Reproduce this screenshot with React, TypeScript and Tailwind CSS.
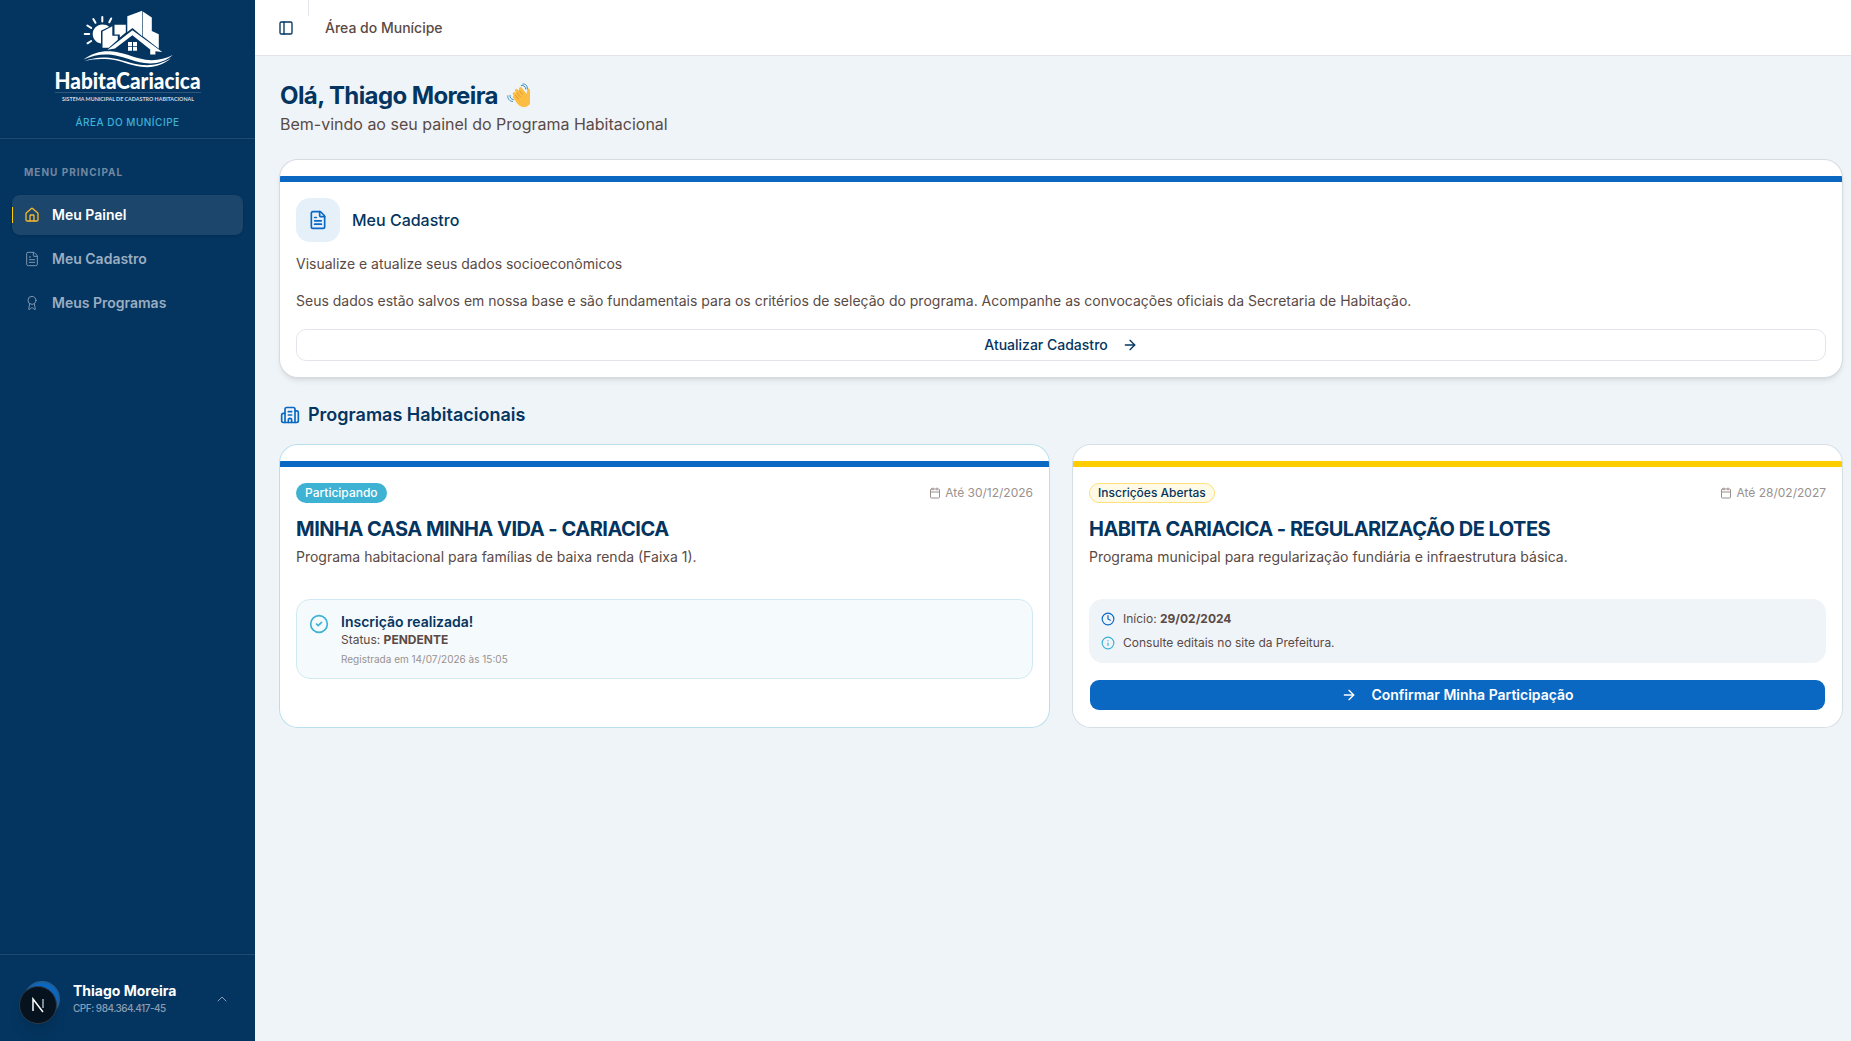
import {
  ArrowRight,
  Award,
  Building2,
  Calendar,
  ChevronUp,
  CircleCheck,
  Clock,
  FileText,
  House,
  Info,
  PanelLeft,
} from "lucide-react";

const Logo = () => (
  <svg
    width="148"
    height="94"
    viewBox="54 9 148 94"
    className="overflow-visible"
    role="img"
    aria-label="HabitaCariacica"
  >
    {/* sun */}
    <path
      stroke="#fff"
      strokeWidth="2"
      strokeLinecap="round"
      d="M102.300 17v4.500M93.300 19l2.200 3.800M87.300 25.500l3.800 2.400M84.700 34h4.500M87.500 43.300l3.700-2.300M111.200 18.500l-1.900 3.800"
    />
    <path
      fill="#fff"
      d="M101 43.500c-4.800-.6-8.300-4.700-8.300-9.500 0-5.300 4.300-9.600 9.600-9.600 3 0 5 .8 6.800 2.400l-8.100 4z"
    />
    {/* buildings */}
    <path fill="#fff" d="M102.500 31.500l9.800-5.200v9.500h5.500v4l-9 8h-6.300z" />
    <path fill="#fff" d="M114.500 24.700h11.300v7.800l-6 5v-3h-5.300z" />
    <path fill="#fff" d="M127.300 16.200l14.900-5.400v25.500l-9.700-8.300-5.200 4z" />
    <path fill="#fff" d="M142.800 11.500l9 6v13.500l7 3.300v14.500l-16-12.600z" />
    {/* house */}
    <path fill="#043560" d="M132.500 34l-18 14.500v4h36v-4z" />
    <path
      fill="#fff"
      d="M132.400 30.200L107.500 49.800l7.500-1.300 17.400-13.300 17.800 14.300v5h5.200v-3.300l6.800.8z"
    />
    <path fill="#fff" d="M128 42h4v3.900h-4zM133 42h4v3.900h-4zM128 46.800h4v3.900h-4zM133 46.800h4v3.900h-4z" />
    {/* waves */}
    <path
      fill="#fff"
      d="M83.500 59.500c9-6.500 18-8.800 27-8.200 13 .9 23 6.500 35 8.500 10 1.300 19-.5 27.300-4.800-8 7-17.500 9.500-28.500 8-12-1.800-21-6.800-33-8.300-10-1-19 .8-27.800 4.800z"
    />
    <path
      fill="#fff"
      d="M84.500 61c8-3.200 16-4.200 25-3.300 12 1.400 22 6.300 33 7.400 11 .8 20-1.500 28.500-7-8 7.500-18 10.200-30 8.700-12-1.700-21-6.500-32-7.500-9-.8-17-.3-24.500 1.700z"
    />
    <text
      x="54.500"
      y="88.700"
      fill="#fff"
      fontFamily="Lato, sans-serif"
      fontWeight="900"
      fontSize="23"
      textLength="146"
      lengthAdjust="spacingAndGlyphs"
    >
      HabitaCariacica
    </text>
    <path stroke="#2d587d" strokeWidth="1" d="M55 92.500h146" />
    <text
      x="62"
      y="100.500"
      fill="#cfd9e3"
      fontFamily="Lato, sans-serif"
      fontWeight="700"
      fontSize="5.500"
      textLength="132"
      lengthAdjust="spacingAndGlyphs"
    >
      SISTEMA MUNICIPAL DE CADASTRO HABITACIONAL
    </text>
  </svg>
);

const WavingHand = () => (
  <svg width="26" height="26" viewBox="0 0 26 26" fill="none" strokeLinecap="round" aria-hidden="true">
    <path
      fill="#fbbd42"
      d="M24 8v13c-2 2.500-4.500 3.500-7.500 3-3-.6-5-2.800-7-6.200l-2.300-3.600 2.500-3.700 6.300-4.500 4.500 5 .8-4.200c.4-2 2.400-1.500 2.700 1.200z"
    />
    <path stroke="#fbbd42" strokeWidth="3.200" d="M8.500 14l4 5M8.300 10.800l6 6.500M10.500 7.500l6 7M14.500 5.800l4.500 6" />
    <path stroke="#dd8f2e" strokeWidth=".8" d="M9.500 12.300l3 3.700M10.800 9.600l3.500 4.200M13.200 7.300l3.300 4.200" />
    <path stroke="#3b8ac4" strokeWidth="1" d="M15.300 2.500c2.200-.6 4.200.8 4.500 3.500M16.800 1c2.800-.4 4.800 1.500 4.500 5" />
    <path stroke="#3b8ac4" strokeWidth="1" d="M4 12.500c-.2 2 1 3.600 3.300 4.200M1.800 12.800c-.3 3 1.500 5.200 4.700 5.700" />
  </svg>
);

const menu = [
  { label: "Meu Painel", icon: House, active: true },
  { label: "Meu Cadastro", icon: FileText, active: false },
  { label: "Meus Programas", icon: Award, active: false },
];

const Sidebar = () => (
  <aside className="flex w-[255px] shrink-0 flex-col bg-[#043560]">
    <div className="flex h-[139px] flex-col items-center border-b border-[#1d4a70] pt-[9px]">
      <Logo />
      <p className="mt-3 text-[10px] leading-[15px] font-medium tracking-[0.5px] text-[#3db2d9] uppercase">
        Área do Munícipe
      </p>
    </div>

    <nav className="flex flex-1 flex-col px-3 pt-[25px]">
      <p className="px-3 text-[10px] leading-4 font-bold tracking-[1px] text-[#7088a0] uppercase">
        Menu Principal
      </p>
      <ul className="mt-[15px] flex flex-col gap-1">
        {menu.map(({ label, icon: Icon, active }) => (
          <li
            key={label}
            className={
              active
                ? "relative flex h-10 items-center gap-3 rounded-lg bg-[#1c466c] px-3 text-sm font-semibold text-white shadow-sm"
                : "flex h-10 items-center gap-3 rounded-lg px-3 text-sm font-semibold text-[#9badc0]"
            }
          >
            {active && <span className="absolute top-3 left-0 h-4 w-px bg-[#ffcc00]" />}
            <Icon
              className={active ? "size-4 text-[#f5b92e]" : "size-4 text-[#7e95ab]"}
              strokeWidth={active ? 2 : 1.5}
            />
            {label}
          </li>
        ))}
      </ul>
    </nav>

    <div className="flex h-[87px] items-center border-t border-[#1d4a70] pt-0.5 pr-[25px] pl-6">
      <div className="relative size-9">
        <span className="absolute top-0 left-0 size-9 rounded-full border-2 border-[#1f5f98] bg-[#0a68c3]" />
        <span className="absolute top-[5px] -left-[5px] flex size-[38px] items-center justify-center rounded-full border border-[#2c3a47] bg-[#06131f] shadow-lg">
          <svg width="14" height="16" viewBox="0 0 14 16" fill="none" strokeWidth="1.500">
            <path d="M2 14V2l10 13" stroke="#fff" />
            <path d="M12 2v9" stroke="#aab2ba" />
          </svg>
        </span>
      </div>
      <div className="ml-[13px] flex-1">
        <p className="text-sm leading-[18px] font-bold text-white">Thiago Moreira</p>
        <p className="text-[10px] leading-4 font-medium tracking-tighter text-[#8a9db3]">
          CPF: 984.364.417-45
        </p>
      </div>
      <ChevronUp className="size-4 text-[#8a9db3]" strokeWidth={1.5} />
    </div>
  </aside>
);

const App = () => {
  return (
    <div className="flex h-[1041px] overflow-hidden bg-[#eff4f9] font-['Inter',sans-serif] text-[#5a4a45]">
      <Sidebar />

      <div className="flex min-w-0 flex-1 flex-col">
        <header className="flex h-14 shrink-0 items-center border-b border-[#e2e5e9] bg-white pl-[23px]">
          <PanelLeft className="size-4 text-[#043560]" />
          <span className="ml-[14px] h-4 w-px self-start bg-[#e2e5e9]" />
          <span className="ml-4 text-sm font-medium">Área do Munícipe</span>
        </header>

        <main className="flex flex-col pt-6 pr-[9px] pl-[25px]">
          <div>
            <h1 className="flex h-8 items-center gap-2 text-2xl font-bold tracking-tight text-[#043560]">
              Olá, Thiago Moreira <WavingHand />
            </h1>
            <p className="text-base leading-6">Bem-vindo ao seu painel do Programa Habitacional</p>
          </div>

          <section className="mt-6 flex flex-col overflow-hidden rounded-[18px] bg-white py-4 shadow-md ring-1 ring-[#d6dbe0]">
            <div className="h-1.5 bg-[#0a68c3]" />
            <div className="mt-4 px-4">
              <div className="flex items-center gap-3">
                <span className="flex size-11 items-center justify-center rounded-[14px] bg-[#e6f0f8]">
                  <FileText className="size-5 text-[#0a68c3]" />
                </span>
                <h2 className="text-base font-medium text-[#043560]">Meu Cadastro</h2>
              </div>
              <p className="mt-3 text-sm">Visualize e atualize seus dados socioeconômicos</p>
              <p className="mt-4 text-sm leading-relaxed">
                Seus dados estão salvos em nossa base e são fundamentais para os critérios de seleção do
                programa. Acompanhe as convocações oficiais da Secretaria de Habitação.
              </p>
              <button className="mt-4 flex h-8 w-full items-center justify-center gap-[14px] rounded-[10px] border border-[#e2e5e9] text-sm font-medium text-[#043560]">
                Atualizar Cadastro
                <ArrowRight className="size-4" />
              </button>
            </div>
          </section>

          <h2 className="mt-6 flex h-7 items-center gap-2 text-lg font-semibold text-[#043560]">
            <Building2 className="size-5 text-[#0a68c3]" />
            Programas Habitacionais
          </h2>

          <div className="mt-4 grid grid-cols-2 gap-6">
            <article className="h-[282px] overflow-hidden rounded-[18px] bg-white py-4 ring-1 ring-[#b9dfee]">
              <div className="h-1.5 bg-[#0a68c3]" />
              <div className="mt-4 px-4">
                <div className="flex items-center justify-between">
                  <span className="flex h-5 items-center rounded-full bg-[#3db2d2] px-[9px] text-xs font-medium text-white">
                    Participando
                  </span>
                  <span className="flex items-center gap-1 text-xs text-[#9a918e]">
                    <Calendar className="size-3" />
                    Até 30/12/2026
                  </span>
                </div>
                <h3 className="mt-3 text-xl leading-7 font-bold tracking-tight text-[#043560]">
                  MINHA CASA MINHA VIDA - CARIACICA
                </h3>
                <p className="mt-1 h-9 text-sm">Programa habitacional para famílias de baixa renda (Faixa 1).</p>
                <div className="mt-4 flex h-20 gap-3 rounded-[14px] border border-[#cfeaf4] bg-[#f5fafd] p-3">
                  <CircleCheck className="mt-0.5 size-5 text-[#3db2d2]" />
                  <div>
                    <p className="text-sm font-semibold text-[#043560]">Inscrição realizada!</p>
                    <p className="text-xs">
                      Status: <strong className="font-bold">PENDENTE</strong>
                    </p>
                    <p className="mt-1 text-[10px] leading-[15px] text-[#9a918e]">
                      Registrada em 14/07/2026 às 15:05
                    </p>
                  </div>
                </div>
              </div>
            </article>

            <article className="h-[282px] overflow-hidden rounded-[18px] bg-white py-4 ring-1 ring-[#d6dfe6]">
              <div className="h-1.5 bg-[#ffcc00]" />
              <div className="mt-4 px-4">
                <div className="flex items-center justify-between">
                  <span className="flex h-5 items-center rounded-full border border-[#ffe07a] bg-[#fffae5] px-2 text-xs font-medium text-[#043560]">
                    Inscrições Abertas
                  </span>
                  <span className="flex items-center gap-1 text-xs text-[#9a918e]">
                    <Calendar className="size-3" />
                    Até 28/02/2027
                  </span>
                </div>
                <h3 className="mt-3 text-xl leading-7 font-bold tracking-tight text-[#043560]">
                  HABITA CARIACICA - REGULARIZAÇÃO DE LOTES
                </h3>
                <p className="mt-1 h-9 text-sm">
                  Programa municipal para regularização fundiária e infraestrutura básica.
                </p>
                <div className="mt-4 flex flex-col gap-2 rounded-[14px] bg-[#eff4f9] p-3 text-xs">
                  <p className="flex items-center gap-2">
                    <Clock className="size-3.5 text-[#0a68c3]" />
                    <span>
                      Início: <strong className="font-bold">29/02/2024</strong>
                    </span>
                  </p>
                  <p className="flex items-center gap-2">
                    <Info className="size-3.5 text-[#3db2d2]" />
                    Consulte editais no site da Prefeitura.
                  </p>
                </div>
                <button className="mt-4 flex h-8 w-full items-center justify-center gap-[14px] rounded-[10px] border border-transparent bg-[#0a68c3] bg-clip-padding text-sm font-semibold text-white">
                  <ArrowRight className="size-4" />
                  Confirmar Minha Participação
                </button>
              </div>
            </article>
          </div>
        </main>
      </div>
    </div>
  );
};

export default App;
